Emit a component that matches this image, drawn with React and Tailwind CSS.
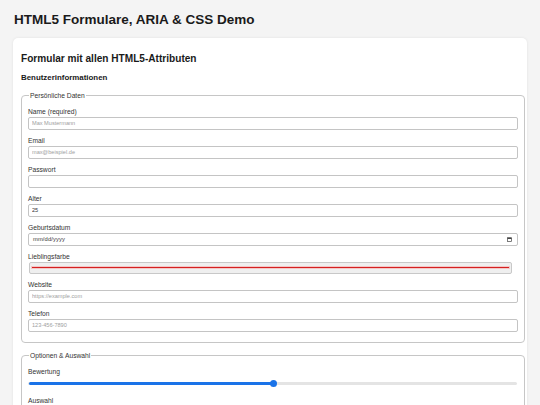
import React, { useState } from 'react';

const fields = [
  { id: 'name', label: 'Name (required)', type: 'text', placeholder: 'Max Mustermann' },
  { id: 'email', label: 'Email', type: 'email', placeholder: 'max@beispiel.de' },
  { id: 'password', label: 'Passwort', type: 'password', placeholder: '' },
  { id: 'age', label: 'Alter', type: 'number', placeholder: '' },
  { id: 'birthday', label: 'Geburtsdatum', type: 'date' },
  { id: 'color', label: 'Lieblingsfarbe', type: 'color' },
  { id: 'website', label: 'Website', type: 'url', placeholder: 'https://example.com' },
  { id: 'phone', label: 'Telefon', type: 'tel', placeholder: '123-456-7890' },
];

function Field({ field, values, onChange }) {
  const inputClass =
    'block w-[490px] h-[13px] px-[3px] border border-[#c4c4c4] rounded-[2px] bg-white text-[5.6px] text-[#333] placeholder:text-[#a0a0a0] outline-none';

  return (
    <div className="mb-[6px]">
      <label htmlFor={field.id} className="block text-[6.7px] leading-[9px] mb-[1px] text-[#333]">
        {field.label}
      </label>

      {field.type === 'color' ? (
        <div className="ml-[1px] w-[483px] h-[12px] flex items-center px-[2px] border border-[#c8c8c8] rounded-[2px] bg-[#efefef]">
          <div className="w-full h-[1.5px] bg-[#d42020] shadow-[0_0_0_1px_#f3c6c6]" />
        </div>
      ) : field.type === 'date' ? (
        <div className="w-[490px] h-[13px] px-[4px] flex items-center justify-between border border-[#c4c4c4] rounded-[2px] bg-white">
          <span className="text-[5.8px] text-[#333] tracking-[0.1px]">mm/dd/yyyy</span>
          <svg width="5" height="5" viewBox="0 0 10 10" className="mr-[1px]">
            <rect x="1" y="1.5" width="8" height="7.5" fill="none" stroke="#444" strokeWidth="1.4" />
            <rect x="1" y="1.5" width="8" height="2.5" fill="#444" />
          </svg>
        </div>
      ) : (
        <input
          id={field.id}
          type={field.type}
          placeholder={field.placeholder}
          value={values[field.id] || ''}
          onChange={(e) => onChange(field.id, e.target.value)}
          className={inputClass}
        />
      )}
    </div>
  );
}

export default function App() {
  const [values, setValues] = useState({ age: '25' });
  const rating = 50;

  const handleChange = (id, value) => {
    setValues({ ...values, [id]: value });
  };

  return (
    <div className="min-h-screen bg-[#f4f4f4] px-[13px] pt-[12px] font-['Liberation_Sans',Arial,sans-serif] text-[#222]">
      <h1 className="text-[13.5px] leading-[16px] font-bold text-[#1a1a1a] ml-[1px]">
        HTML5 Formulare, ARIA &amp; CSS Demo
      </h1>

      <div className="mt-[10px] bg-white rounded-[5px] shadow-[0_0_3px_rgba(0,0,0,0.08)] px-[8px] pt-[15px] pb-[10px]">
        <h2 className="text-[10.1px] leading-[12px] font-bold text-[#1a1a1a]">
          Formular mit allen HTML5-Attributen
        </h2>
        <h3 className="mt-[8px] text-[7.9px] leading-[10px] font-bold text-[#1a1a1a]">
          Benutzerinformationen
        </h3>

        {/* Persönliche Daten */}
        <fieldset className="mt-[7.5px] border border-[#c6c6c6] rounded-[4px] px-[6px] pt-[7px] pb-[4px]">
          <legend className="px-[1px] ml-[1px] text-[6.7px] leading-[9px] text-[#333]">Persönliche Daten</legend>
          {fields.map((field) => (
            <Field key={field.id} field={field} values={values} onChange={handleChange} />
          ))}
        </fieldset>

        {/* Optionen & Auswahl */}
        <fieldset className="mt-[8px] border border-[#c6c6c6] rounded-[4px] px-[6px] pt-[7px] pb-[6px]">
          <legend className="px-[1px] ml-[1px] text-[6.7px] leading-[9px] text-[#333]">Optionen &amp; Auswahl</legend>

          <div className="mb-[8.5px]">
            <label className="block text-[6.7px] leading-[9px] mb-[4px] text-[#333]">Bewertung</label>
            <div className="relative w-[489px] h-[8px] flex items-center">
              <div className="w-full h-[3px] rounded-full bg-[#e4e4e4]" />
              <div
                className="absolute left-[1px] h-[3px] rounded-full bg-[#1a73e8]"
                style={{ width: `${rating}%` }}
              />
              <div
                className="absolute w-[7px] h-[7px] -ml-[3px] rounded-full bg-[#1a73e8]"
                style={{ left: `${rating}%` }}
              />
            </div>
          </div>

          <div className="mb-[6px]">
            <label className="block text-[6.7px] leading-[9px] mb-[1px] text-[#333]">Auswahl</label>
            <div className="w-[490px] h-[13px] border border-[#c4c4c4] rounded-[2px] bg-white" />
          </div>
        </fieldset>
      </div>
    </div>
  );
}
